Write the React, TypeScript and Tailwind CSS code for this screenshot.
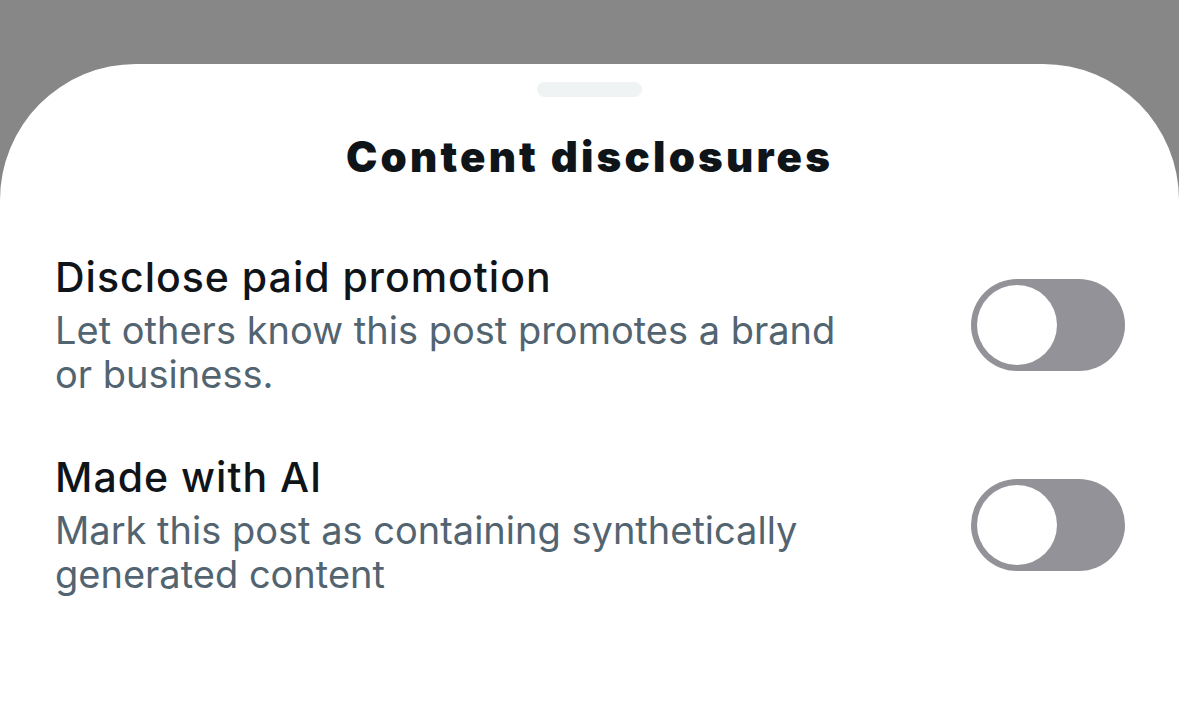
import React from 'react';

const options = [
  {
    title: 'Disclose paid promotion',
    description: 'Let others know this post promotes a brand or business.',
  },
  {
    title: 'Made with AI',
    description: 'Mark this post as containing synthetically generated content',
  },
];

function Toggle() {
  return (
    <div className="flex h-[92px] w-[154px] shrink-0 items-center rounded-full bg-[#939298] px-[6px]">
      <div className="h-[80px] w-[80px] rounded-full bg-white" />
    </div>
  );
}

export default function App() {
  return (
    <div
      className="flex h-[724px] w-full flex-col bg-[#878787] pt-[64px]"
      style={{ fontFamily: 'Inter, "Noto Sans", sans-serif' }}
    >
      <div className="flex flex-1 flex-col rounded-t-[136px] bg-white">
        {/* drag handle */}
        <div className="mx-auto mt-[18px] h-[15px] w-[105px] rounded-full bg-[#eff3f4]" />

        <h1 className="mt-[36px] text-center text-[42px] leading-[48px] font-black tracking-[3.2px] text-[#0f1419]">
          Content disclosures
        </h1>

        <div className="mt-[72px] flex flex-col gap-[57px] pl-[55px] pr-[54px]">
          {options.map((option) => (
            <div key={option.title} className="flex items-center justify-between">
              <div className="max-w-[800px]">
                <div className="text-[41px] leading-[48px] font-medium tracking-[1px] text-[#0f1419]">
                  {option.title}
                </div>
                <p className="mt-[7px] text-[38px] leading-[44px] text-[#536471]">
                  {option.description}
                </p>
              </div>
              <Toggle />
            </div>
          ))}
        </div>
      </div>
    </div>
  );
}
